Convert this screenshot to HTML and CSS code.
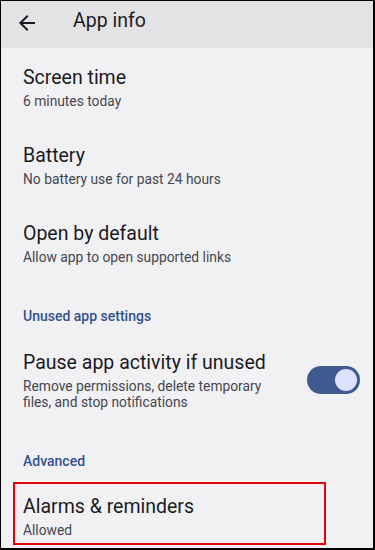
FILE: index.html
```html
<!DOCTYPE html>
<html lang="en">
<head>
  <meta charset="UTF-8" />
  <meta name="viewport" content="width=device-width, initial-scale=1.0" />
  <title>App info</title>
  <link rel="stylesheet" href="styles.css">
</head>
<body>
  <div class="screen">

    <header class="topbar">
      <svg class="back" width="24" height="24" viewBox="0 0 24 24" aria-hidden="true">
        <path d="M20 11H7.83l5.59-5.59L12 4l-8 8 8 8 1.41-1.41L7.83 13H20v-2z" fill="#1b1b1f"/>
      </svg>
      <h1>App info</h1>
    </header>

    <main>
      <div class="item">
        <div class="item-title">Screen time</div>
        <div class="item-sub">6 minutes today</div>
      </div>

      <div class="item">
        <div class="item-title">Battery</div>
        <div class="item-sub">No battery use for past 24 hours</div>
      </div>

      <div class="item">
        <div class="item-title">Open by default</div>
        <div class="item-sub">Allow app to open supported links</div>
      </div>

      <div class="section">Unused app settings</div>

      <div class="item item-switch">
        <div class="item-text">
          <div class="item-title">Pause app activity if unused</div>
          <div class="item-sub">Remove permissions, delete temporary files, and stop notifications</div>
        </div>
        <div class="toggle on"><span class="thumb"></span></div>
      </div>

      <div class="section section-adv">Advanced</div>

      <div class="item marked">
        <div class="item-title">Alarms &amp; reminders</div>
        <div class="item-sub">Allowed</div>
      </div>
    </main>

  </div>
</body>
</html>
```

FILE: styles.css
```css
body {
  margin: 0;
  font-family: Roboto, "Noto Sans", Arial, sans-serif;
  color: #1b1b1f;
}
.screen {
  width: 375px;
  height: 550px;
  box-sizing: border-box;
  border: 1px solid #000;
  border-right-width: 2px;
  border-bottom-width: 2px;
  background: #f1f1f4;
  overflow: hidden;
}
.topbar {
  height: 47px;
  box-sizing: border-box;
  padding-top: 8px;
  background: #e3e3e6;
  display: flex;
  align-items: flex-start;
}
.back {
  margin: 2px 0 0 14px;
  flex: 0 0 24px;
}
.topbar h1 {
  margin: 0 0 0 34px;
  font-size: 19.5px;
  line-height: 24px;
  font-weight: 400;
}
.item {
  padding: 17px 0 16.5px 22px;
}
.item-title {
  font-size: 19.5px;
  line-height: 26px;
}
.item-sub {
  margin-top: 3px;
  font-size: 13.8px;
  line-height: 15.5px;
  color: #45464f;
}
.section {
  padding: 24px 0 7px 22px;
  font-size: 14px;
  line-height: 20px;
  font-weight: 500;
  color: #33508c;
}
.section-adv {
  padding-bottom: 11px;
}
.item-switch {
  display: flex;
  align-items: center;
  padding-right: 13px;
}
.item-text {
  flex: 1;
  padding-right: 30px;
}
.toggle {
  flex: 0 0 53px;
  height: 28px;
  border-radius: 14px;
  background: #3e5a8e;
  display: flex;
  align-items: center;
  justify-content: flex-end;
  padding-right: 3px;
  box-sizing: border-box;
}
.toggle .thumb {
  width: 22px;
  height: 22px;
  border-radius: 50%;
  background: #dde2ff;
}
.marked {
  margin: 0 47px 0 12px;
  border: 2px solid #e3000b;
  padding: 10.5px 0 4px 8px;
}
```
